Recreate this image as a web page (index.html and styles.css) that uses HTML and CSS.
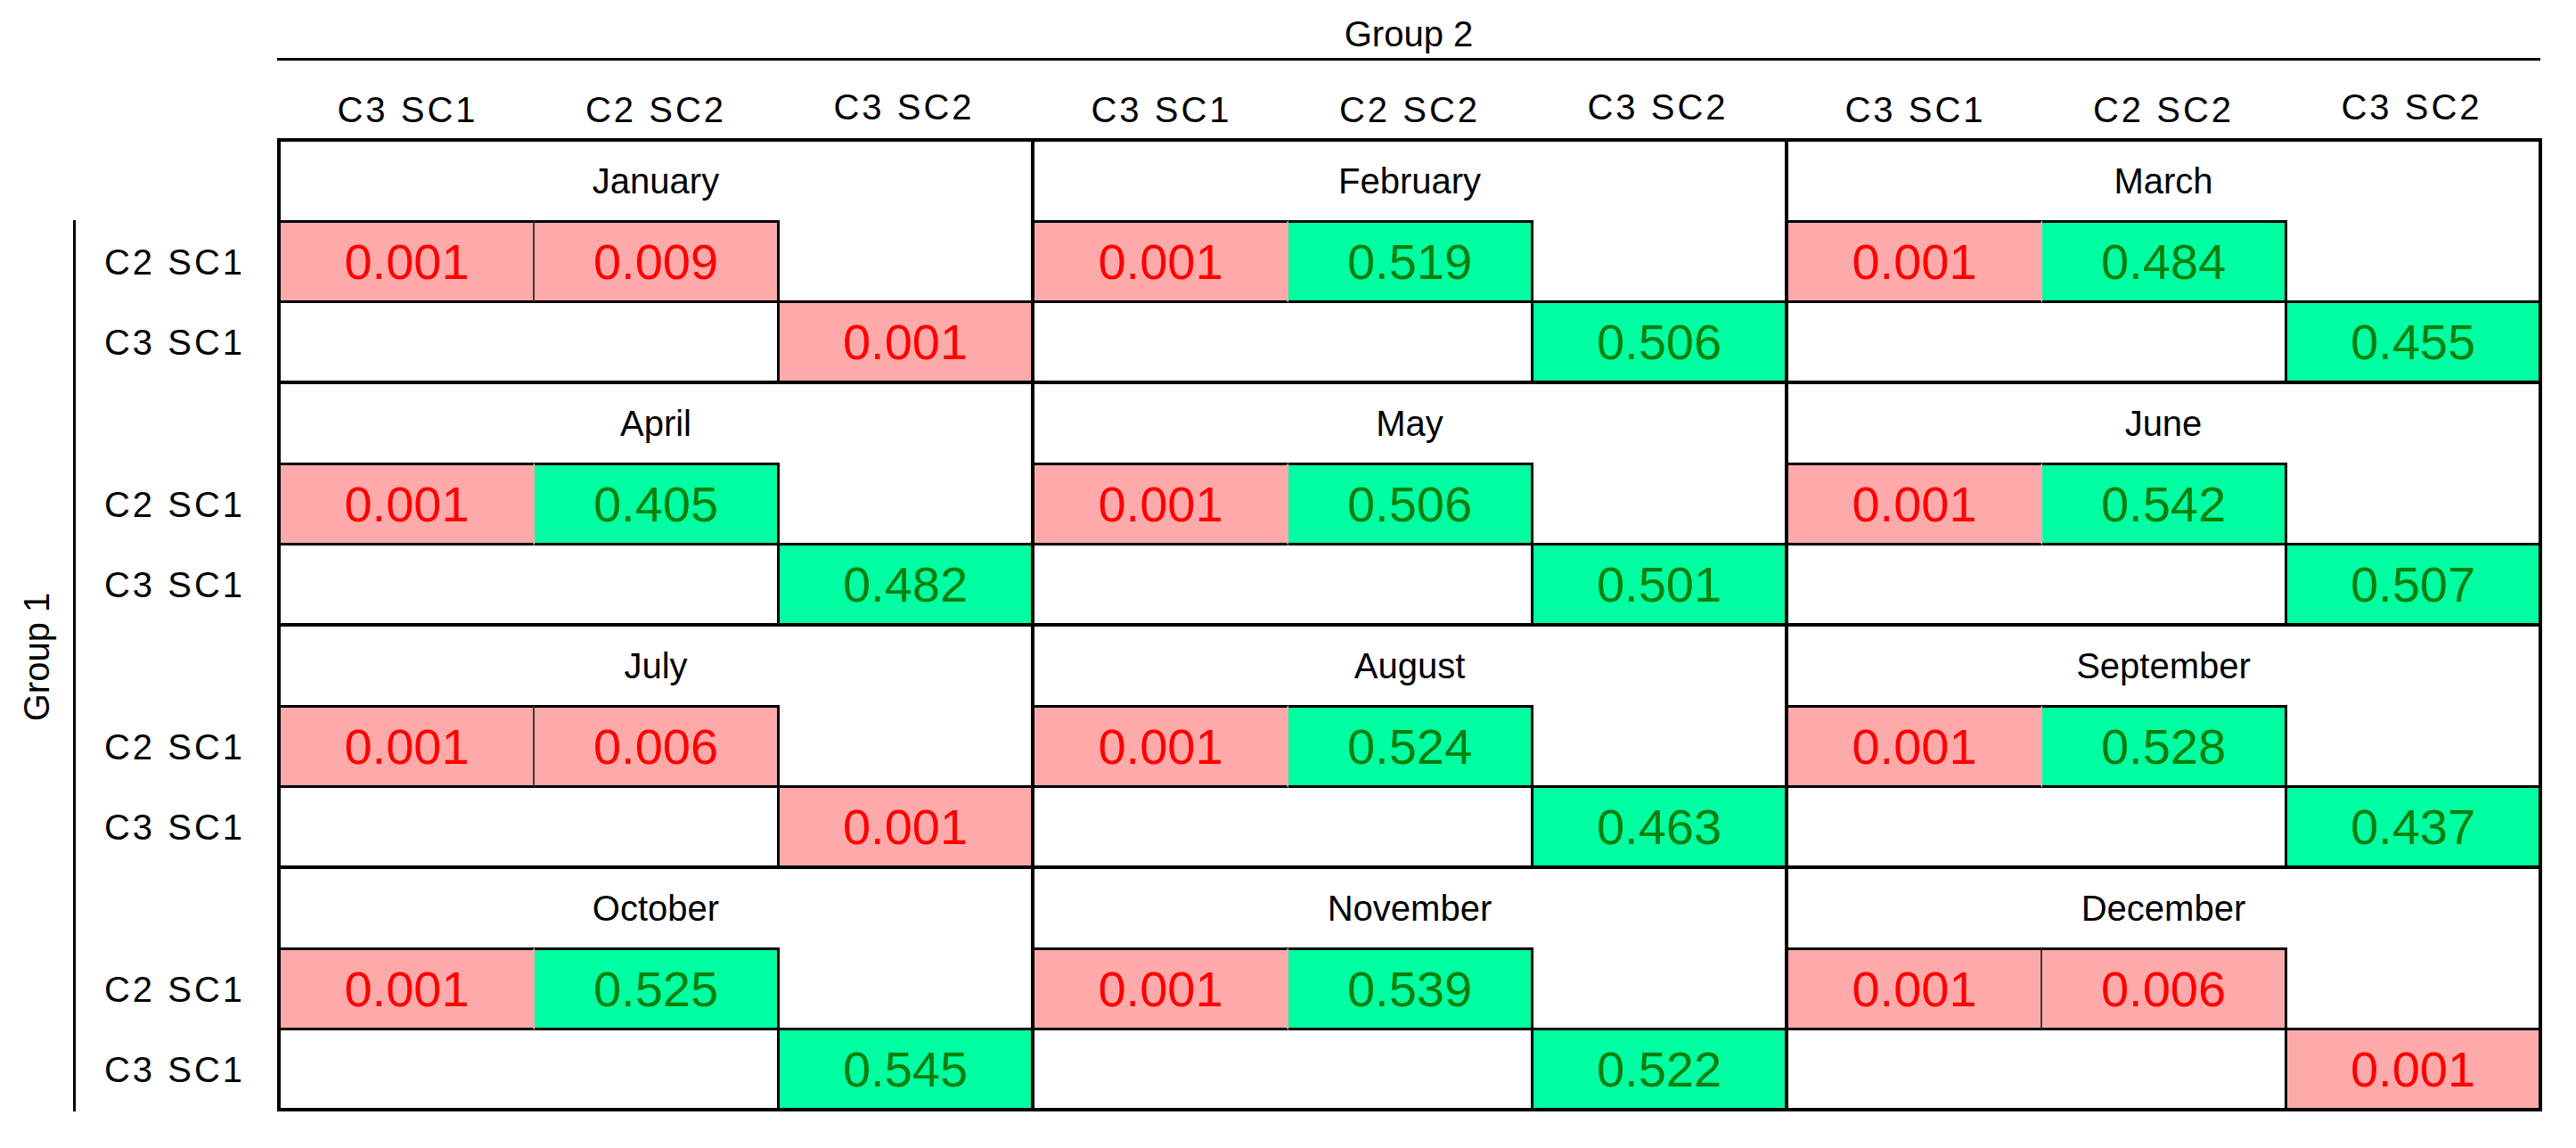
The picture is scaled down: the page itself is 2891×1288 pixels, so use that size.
FILE: index.html
```html
<!DOCTYPE html>
<html lang="en">
<head>
<meta charset="utf-8">
<title>Group comparison by month</title>
<link rel="stylesheet" href="styles.css">
</head>
<body>
<div class="page">
  <div class="top">
    <div class="g2">Group 2</div>
    <div class="heads">
      <div class="hgroup"><span>C3 SC1</span><span>C2 SC2</span><span class="hi">C3 SC2</span></div>
      <div class="hgroup"><span>C3 SC1</span><span>C2 SC2</span><span class="hi">C3 SC2</span></div>
      <div class="hgroup"><span>C3 SC1</span><span>C2 SC2</span><span class="hi">C3 SC2</span></div>
    </div>
  </div>
  <div class="main">
    <div class="g1-wrap"><div class="g1">Group 1</div></div>
    <div class="vline"></div>
    <div class="labels">
      <div class="band-l"><div class="sp"></div><div class="rl r1">C2 SC1</div><div class="rl r2">C3 SC1</div></div>
      <div class="band-l"><div class="sp"></div><div class="rl r1">C2 SC1</div><div class="rl r2">C3 SC1</div></div>
      <div class="band-l"><div class="sp"></div><div class="rl r1">C2 SC1</div><div class="rl r2">C3 SC1</div></div>
      <div class="band-l"><div class="sp"></div><div class="rl r1">C2 SC1</div><div class="rl r2">C3 SC1</div></div>
    </div>
    <div class="table">
      <div class="block"><div class="title">January</div><div class="c a pink pp">0.001</div><div class="c b pink">0.009</div><div class="e1"></div><div class="e2"></div><div class="c d pink">0.001</div></div>
      <div class="block"><div class="title">February</div><div class="c a pink">0.001</div><div class="c b green">0.519</div><div class="e1"></div><div class="e2"></div><div class="c d green">0.506</div></div>
      <div class="block"><div class="title">March</div><div class="c a pink">0.001</div><div class="c b green">0.484</div><div class="e1"></div><div class="e2"></div><div class="c d green">0.455</div></div>

      <div class="block"><div class="title">April</div><div class="c a pink">0.001</div><div class="c b green">0.405</div><div class="e1"></div><div class="e2"></div><div class="c d green">0.482</div></div>
      <div class="block"><div class="title">May</div><div class="c a pink">0.001</div><div class="c b green">0.506</div><div class="e1"></div><div class="e2"></div><div class="c d green">0.501</div></div>
      <div class="block"><div class="title">June</div><div class="c a pink">0.001</div><div class="c b green">0.542</div><div class="e1"></div><div class="e2"></div><div class="c d green">0.507</div></div>

      <div class="block"><div class="title">July</div><div class="c a pink pp">0.001</div><div class="c b pink">0.006</div><div class="e1"></div><div class="e2"></div><div class="c d pink">0.001</div></div>
      <div class="block"><div class="title">August</div><div class="c a pink">0.001</div><div class="c b green">0.524</div><div class="e1"></div><div class="e2"></div><div class="c d green">0.463</div></div>
      <div class="block"><div class="title">September</div><div class="c a pink">0.001</div><div class="c b green">0.528</div><div class="e1"></div><div class="e2"></div><div class="c d green">0.437</div></div>

      <div class="block"><div class="title">October</div><div class="c a pink">0.001</div><div class="c b green">0.525</div><div class="e1"></div><div class="e2"></div><div class="c d green">0.545</div></div>
      <div class="block"><div class="title">November</div><div class="c a pink">0.001</div><div class="c b green">0.539</div><div class="e1"></div><div class="e2"></div><div class="c d green">0.522</div></div>
      <div class="block"><div class="title">December</div><div class="c a pink pp">0.001</div><div class="c b pink">0.006</div><div class="e1"></div><div class="e2"></div><div class="c d pink">0.001</div></div>
    </div>
  </div>
</div>
</body>
</html>
```

FILE: styles.css
```css
* { box-sizing: border-box; }
html, body { margin: 0; padding: 0; background: #fff; }
body {
  font-family: "Liberation Sans", Arial, sans-serif;
  color: #000;
  width: 2891px;
  height: 1288px;
  overflow: hidden;
}
.page { display: flex; flex-direction: column; }

.top { padding-left: 311px; }
.g2 {
  width: 2540px;
  text-align: center;
  font-size: 40px;
  line-height: 40px;
  padding-top: 18px;
  padding-bottom: 7px;
  border-bottom: 3px solid #000;
}
.heads {
  width: 2542px;
  height: 87px;
  padding: 0 2px;
  display: flex;
}
.hgroup {
  padding: 35px 2px 0;
  display: grid;
  grid-template-columns: 285px 272px 285px;
  align-items: start;
}
.hgroup span {
  font-size: 40px;
  line-height: 40px;
  letter-spacing: 3px;
  text-align: center;
  white-space: nowrap;
}
.hgroup span.hi { margin-top: -3px; }

.main { display: flex; }
.g1-wrap {
  width: 82px;
  margin-top: 92px;
  height: 1000px;
  padding-bottom: 20px;
  display: flex;
  align-items: center;
  justify-content: center;
}
.g1 {
  font-size: 40px;
  line-height: 40px;
  white-space: nowrap;
  transform: rotate(-90deg);
}
.vline {
  width: 3px;
  margin-top: 92px;
  height: 1000px;
  background: #000;
}
.labels {
  width: 226px;
  padding-top: 2px;
  padding-right: 4px;
}
.band-l {
  height: 272px;
  padding: 2px 0;
  display: flex;
  flex-direction: column;
}
.band-l .sp { height: 88px; }
.rl {
  display: flex;
  align-items: center;
  justify-content: center;
  font-size: 40px;
  line-height: 40px;
  letter-spacing: 3px;
  white-space: nowrap;
}
.rl.r1 { height: 93px; }
.rl.r2 { height: 87px; }

.table {
  width: 2542px;
  border: 2px solid #000;
  display: grid;
  grid-template-columns: repeat(3, 846px);
}
.block {
  height: 272px;
  border: 2px solid #000;
  display: grid;
  grid-template-columns: 285px 272px 285px;
  grid-template-rows: 88px 93px 87px;
}
.title {
  grid-column: 1 / -1;
  display: flex;
  align-items: center;
  justify-content: center;
  font-size: 40px;
  line-height: 40px;
  white-space: nowrap;
}
.c {
  display: flex;
  align-items: center;
  justify-content: center;
  font-size: 56px;
  line-height: 56px;
}
.c.a, .c.b {
  grid-row: 2;
  border-top: 3px solid #000;
  border-bottom: 3px solid #000;
}
.c.a { grid-column: 1; border-right: 2px solid transparent; }
.c.a.pp { border-right-color: #3a3a3a; }
.c.b { grid-column: 2; }
.e1 {
  grid-row: 2;
  grid-column: 3;
  border-left: 3px solid #000;
  border-bottom: 3px solid #000;
}
.e2 { grid-row: 3; grid-column: 1 / 3; }
.c.d {
  grid-row: 3;
  grid-column: 3;
  border-left: 3px solid #000;
}
.pink { background: #ffaaaa; color: #ff0000; }
.green { background: #00ffa2; color: #0a800a; }
```
